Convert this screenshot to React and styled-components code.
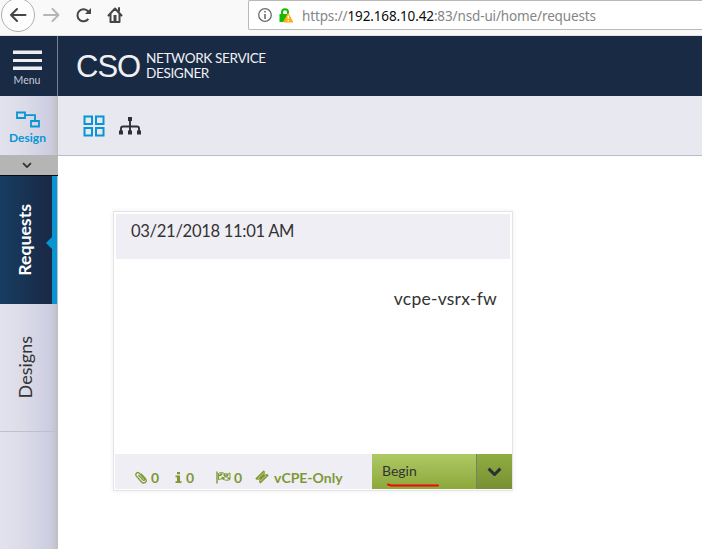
import React from "react";
import styled, { createGlobalStyle } from "styled-components";

const GlobalStyle = createGlobalStyle`
  * { box-sizing: border-box; }
  body { margin: 0; background: #fff; font-family: Lato, sans-serif; color: #333; overflow: hidden; }
  svg { display: block; flex: none; }
`;

const Window = styled.div`
  width: 702px;
  height: 549px;
  display: flex;
  flex-direction: column;
  overflow: hidden;
`;

const BrowserBar = styled.div`
  height: 36px;
  flex: none;
  display: flex;
  background: #f9f9fa;
  border-bottom: 1px solid #e1e1e2;
`;

const NavButtons = styled.div`
  width: 248px;
  height: 35px;
  flex: none;
`;

const AddressBar = styled.div`
  flex: 1;
  height: 30px;
  display: flex;
  align-items: center;
  padding: 2px 0 0 9px;
  background: #fff;
  border: 1px solid #b9b9b9;
  border-right: 0;
  border-radius: 2px 0 0 2px;
`;

const Url = styled.span`
  margin-left: 7px;
  font: 13.5px/20px "Noto Sans", sans-serif;
  letter-spacing: -0.13px;
  color: #858585;
  white-space: nowrap;
`;

const Host = styled.span`
  color: #0c0c0d;
`;

const Header = styled.header`
  height: 60px;
  flex: none;
  display: flex;
  background: #192a45;
  color: #f0f0f2;
`;

const MenuButton = styled.div`
  width: 58px;
  flex: none;
  display: flex;
  flex-direction: column;
  align-items: center;
  padding: 14px 3px 0 0;
  border-right: 1px solid #7b8390;
  font-size: 10.5px;
  line-height: 14px;
  color: #c6cad4;
`;

const MenuLabel = styled.span`
  margin-top: 2px;
`;

const Brand = styled.div`
  display: flex;
  padding-left: 18px;
`;

const Acronym = styled.span`
  width: 70px;
  padding-top: 13px;
  font: 31px/36px "Liberation Sans", sans-serif;
  letter-spacing: -1px;
`;

const ProductName = styled.span`
  padding-top: 15px;
  font-size: 13.6px;
  line-height: 15px;
  letter-spacing: -0.38px;
  white-space: nowrap;
`;

const Body = styled.div`
  flex: 1;
  display: flex;
  min-height: 0;
`;

const Sidebar = styled.nav`
  width: 58px;
  flex: none;
  display: flex;
  flex-direction: column;
  background: linear-gradient(90deg, #e2e2ee 0, #dedeea 30%, #cdcde2 86%, #c4c4cc 96%, #bdbdbf 100%);
`;

const DesignTab = styled.div`
  height: 59px;
  padding: 15px 3px 0 0;
  display: flex;
  flex-direction: column;
  align-items: center;
  color: #0795d3;
  font-size: 12px;
  font-weight: 700;
  line-height: 16px;
`;

const DesignLabel = styled.span`
  margin-top: 2px;
`;

const Collapse = styled.div`
  height: 21px;
  display: flex;
  justify-content: center;
  align-items: center;
  padding-right: 4px;
  background: #b5b5b5;
  border-bottom: 1px solid #050b15;
`;

const SideItem = styled.div`
  height: 128px;
  width: ${(p) => (p.$active ? "57px" : "58px")};
  display: flex;
  align-items: center;
  justify-content: space-between;
  padding-left: 13px;
  background: ${(p) => (p.$active ? "linear-gradient(90deg, #163d62, #1a2a47 90%)" : "transparent")};
  color: ${(p) => (p.$active ? "#fff" : "#333")};
  border-right: ${(p) => (p.$active ? "5px solid #0795d3" : "0")};
  border-bottom: ${(p) => (p.$active ? "0" : "1px solid #c0c0c8")};
`;

const SideLabel = styled.span`
  writing-mode: vertical-rl;
  transform: rotate(180deg);
  font-size: ${(p) => (p.$bold ? "17.7px" : "18px")};
  line-height: 24px;
  font-weight: ${(p) => (p.$bold ? 700 : 400)};
`;

const Arrow = styled.svg`
  margin-top: 5px;
`;

const Main = styled.main`
  flex: 1;
  display: flex;
  flex-direction: column;
`;

const Toolbar = styled.div`
  height: 60px;
  flex: none;
  display: flex;
  align-items: center;
  gap: 14px;
  padding-left: 25px;
  background: #e8e8f0;
  border-bottom: 1px solid #bdbdc1;
`;

const Card = styled.article`
  width: 400px;
  height: 280px;
  margin: 55px 0 0 55px;
  padding: 2px 2px 1px;
  display: flex;
  flex-direction: column;
  background: #fff;
  border: 1px solid #e4e4e4;
  box-shadow: 0 0 5px rgba(0, 0, 0, 0.07);
`;

const CardDate = styled.div`
  height: 45px;
  flex: none;
  padding: 5px 0 0 15px;
  background: #efeef4;
  font-size: 16.6px;
  line-height: 24px;
  letter-spacing: -0.32px;
`;

const CardTitle = styled.div`
  flex: 1;
  padding: 28px 13px 0 0;
  text-align: right;
  font-size: 17.5px;
  line-height: 24px;
  letter-spacing: 0.24px;
`;

const CardFooter = styled.div`
  height: 35px;
  flex: none;
  display: flex;
  margin: 0 -2px 0 -1px;
  background: #efeef4;
`;

const Stats = styled.div`
  width: 257px;
  flex: none;
  display: flex;
  padding: 15px 0 0 20px;
`;

const Stat = styled.div`
  width: ${(p) => p.$width}px;
  flex: none;
  display: flex;
  align-items: center;
  gap: ${(p) => p.$gap}px;
  height: 16px;
  color: #7e9934;
  font-size: 14px;
  font-weight: 700;
  white-space: nowrap;
`;

const BeginButton = styled.div`
  width: 104px;
  padding: 7px 0 0 10px;
  background: linear-gradient(#afc965, #8ca83a);
  font-size: 14px;
  line-height: 20px;
`;

const Underline = styled.svg`
  margin: 2px 0 0 4px;
`;

const DropButton = styled.div`
  flex: 1;
  display: flex;
  align-items: center;
  justify-content: center;
  background: linear-gradient(#8fad42, #789033);
  border-left: 1px solid #77806a;
`;

function NavigationIcons() {
  return (
    <svg width="248" height="35" fill="none" stroke="#454545" strokeWidth="2">
      <circle cx="18" cy="15" r="16.5" fill="#fdfdfd" stroke="#b0b0b0" strokeWidth="1" />
      <path d="M11 15h14.500M17 9l-6 6 6 6" strokeLinecap="round" strokeLinejoin="round" />
      <path d="M44 15h14M52.500 9l6 6-6 6" stroke="#b5b5b6" strokeLinecap="round" strokeLinejoin="round" />
      <path d="M88.300 18.800A6 6 0 1 1 87.500 10.800L89.500 12.800" />
      <path d="M91 8v6h-6z" fill="#454545" stroke="none" />
      <path d="M108.500 15.500l6.500-7 6.500 7M110.500 14v8h9v-8M119 8v3" strokeLinecap="round" strokeLinejoin="round" />
      <path d="M113.500 15h3v7h-3z" fill="#454545" stroke="none" />
    </svg>
  );
}

function SecurityIcons() {
  return (
    <svg width="37" height="18" fill="none">
      <circle cx="7" cy="8" r="6.300" stroke="#6b6b6b" strokeWidth="1.300" />
      <path d="M6.200 7h1.600v5H6.200zM6.200 4h1.600v1.600H6.200z" fill="#6b6b6b" />
      <path d="M24 9V5.200a3 3 0 0 1 6 0V7" stroke="#12bc00" strokeWidth="2" />
      <path d="M21.500 7h8.500v8h-8.500z" fill="#12bc00" />
      <path d="M30.200 6.500l4.600 8.500h-9.200z" fill="#ffad14" stroke="#ffad14" strokeLinejoin="round" />
      <path d="M29.600 8.500h1.300v3.500h-1.300zM29.600 13h1.300v1.300h-1.300z" fill="#fff" />
    </svg>
  );
}

function MenuBars() {
  return (
    <svg width="29" height="21">
      <path d="M0 0.500h29v3.500H0zM0 9h29v3H0zM0 16.500h29v3.500H0z" fill="#eeeef0" />
    </svg>
  );
}

function DesignIcon() {
  return (
    <svg width="24" height="17" fill="none" stroke="#0795d3" strokeWidth="1.800">
      <path d="M1 1.500h8v5.500H1zM15 10h8v5.500h-8zM9 4.200h10V10" />
    </svg>
  );
}

function GridIcon() {
  return (
    <svg width="22" height="22" fill="none" stroke="#0795d3" strokeWidth="2">
      <path d="M1.500 1.500h7.500v7.500H1.500zM13 1.500h7.500v7.500H13zM1.500 13h7.500v7.500H1.500zM13 13h7.500v7.500H13z" />
    </svg>
  );
}

function TreeIcon() {
  return (
    <svg width="22" height="18" fill="#303034">
      <path d="M9 0h4v4H9zM0 13.500h4v4H0zM9 13.500h4v4H9zM18 13.500h4v4h-4z" />
      <path d="M11 3v11M2 14v-2.500q0-2 2-2h14q2 0 2 2V14" fill="none" stroke="#303034" strokeWidth="1.900" />
    </svg>
  );
}

function Chevron({ size, weight, color }) {
  return (
    <svg width={size} height={size * 0.65} viewBox="0 0 14 9" fill="none">
      <path d="M1.500 1.500L7 7l5.500-5.500" stroke={color} strokeWidth={weight} />
    </svg>
  );
}

function Clip() {
  return (
    <svg width="12" height="13" fill="none" stroke="#7e9934" strokeWidth="1.300">
      <path d="M3.500 4L8 9q1.500 1.200 1.600-.8L5 2.800C3 .2-.2 2.200 1.200 5l5.300 6c2.600 2.400 6-.2 4.200-3L6 2.800" />
    </svg>
  );
}

function Info() {
  return (
    <svg width="7" height="11" fill="#7e9934">
      <path d="M2 0h3v2.300H2zM.5 3.500H5v5.700h1.500V11H.5V9.200H2V5.300H.5z" />
    </svg>
  );
}

function CheckeredFlag() {
  return (
    <svg width="15" height="13" fill="none" stroke="#7e9934">
      <path d="M1 .5v12" strokeWidth="1.400" />
      <path d="M2.500 2.500c2-1.200 4-1.200 5.800 0 2 .8 3.700.5 5.700-.5v6.500c-2 1-4 1-5.700.2-2-1.200-3.800-1-5.800 0z" />
      <path d="M3 4.800q1.200-.9 2.500-.9M5.500 6.800q1.500-.2 3 .8M8.500 5q1.500.8 3 .4M11.500 7.500q1.200 0 2.300-.7M5.500 2.300v1.800M8.500 3v2M11.500 3v2" strokeWidth="1.900" />
    </svg>
  );
}

function Ticket() {
  return (
    <svg width="14" height="14" fill="#7e9934">
      <path d="M8.500 .5l1.600 1.300a1.400 1.400 0 0 0 2 2L13.700 5.500 5.500 13.500l-1.600-1.600a1.400 1.400 0 0 0-2-2L.3 8.500z" />
      <path d="M8.500 3.100L3.100 8.300 5.600 10.800 11 5.600z" fill="none" stroke="#dfe4cd" strokeWidth=".7" />
    </svg>
  );
}

export default function App() {
  return (
    <Window>
      <GlobalStyle />
      <BrowserBar>
        <NavButtons><NavigationIcons /></NavButtons>
        <AddressBar>
          <SecurityIcons />
          <Url>https://<Host>192.168.10.42</Host>:83/nsd-ui/home/requests</Url>
        </AddressBar>
      </BrowserBar>
      <Header>
        <MenuButton><MenuBars /><MenuLabel>Menu</MenuLabel></MenuButton>
        <Brand>
          <Acronym>CSO</Acronym>
          <ProductName>NETWORK SERVICE<br />DESIGNER</ProductName>
        </Brand>
      </Header>
      <Body>
        <Sidebar>
          <DesignTab><DesignIcon /><DesignLabel>Design</DesignLabel></DesignTab>
          <Collapse><Chevron size={10} weight={2.6} color="#333" /></Collapse>
          <SideItem $active>
            <SideLabel $bold>Requests</SideLabel>
            <Arrow width="6" height="12"><path d="M6 0v12L0 6z" fill="#0795d3" /></Arrow>
          </SideItem>
          <SideItem><SideLabel>Designs</SideLabel></SideItem>
        </Sidebar>
        <Main>
          <Toolbar><GridIcon /><TreeIcon /></Toolbar>
          <Card>
            <CardDate>03/21/2018 11:01 AM</CardDate>
            <CardTitle>vcpe-vsrx-fw</CardTitle>
            <CardFooter>
              <Stats>
                <Stat $width={40} $gap={4}><Clip />0</Stat>
                <Stat $width={41} $gap={4}><Info />0</Stat>
                <Stat $width={39} $gap={3}><CheckeredFlag />0</Stat>
                <Stat $width={100} $gap={5}><Ticket />vCPE-Only</Stat>
              </Stats>
              <BeginButton>
                Begin
                <Underline width="56" height="5" fill="none" stroke="#f3060b" strokeWidth="2" strokeLinecap="round">
                  <path d="M2 1.500l3 1h47" />
                </Underline>
              </BeginButton>
              <DropButton><Chevron size={15} weight={2.8} color="#2d3136" /></DropButton>
            </CardFooter>
          </Card>
        </Main>
      </Body>
    </Window>
  );
}
